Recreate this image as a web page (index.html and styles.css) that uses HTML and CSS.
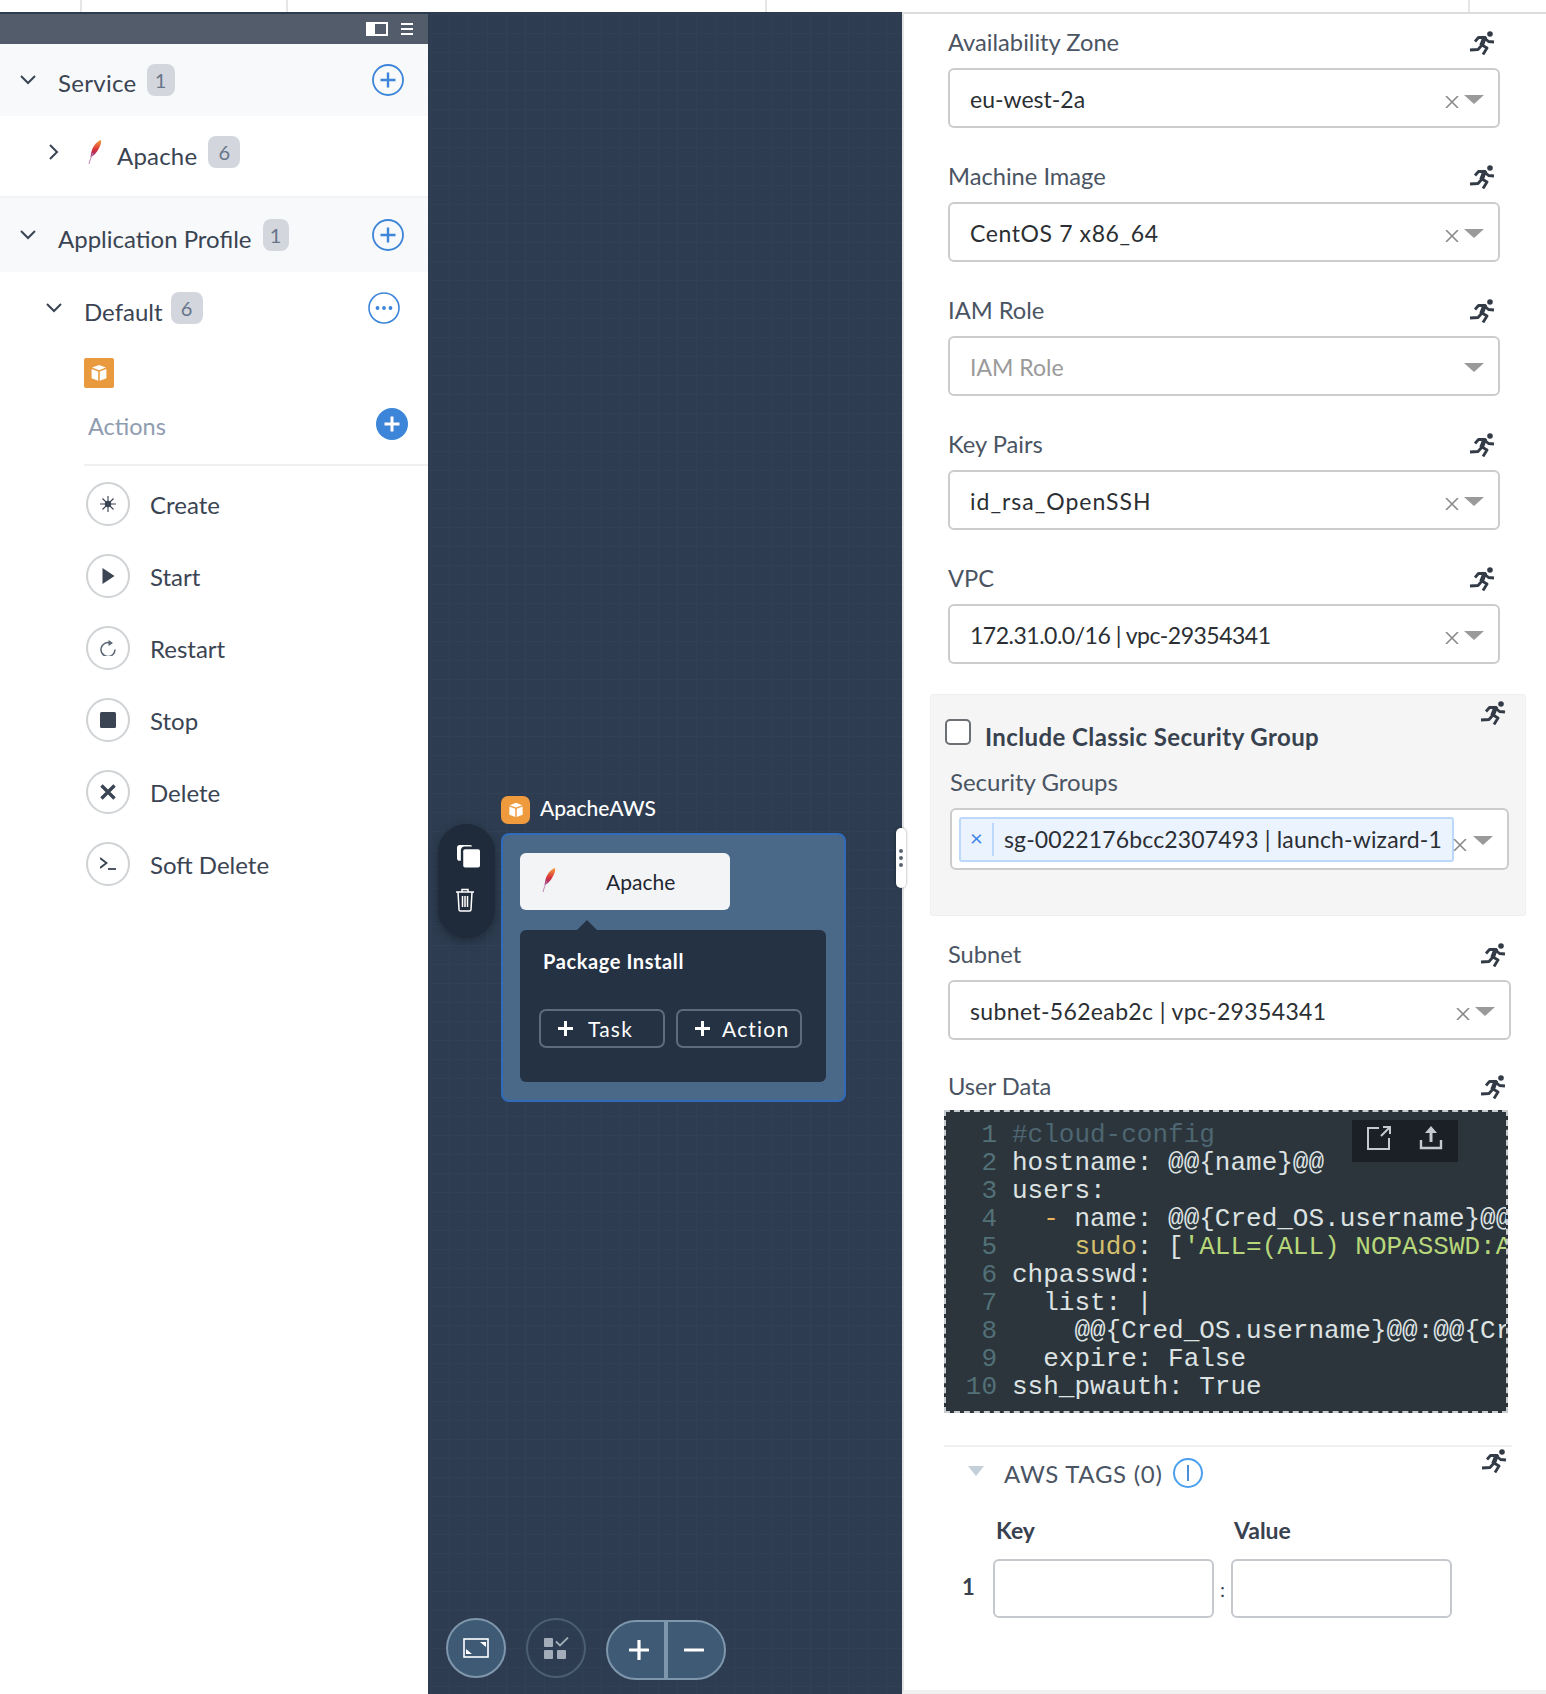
FILE: index.html
```html
<!DOCTYPE html>
<html lang="en">
<head>
  <meta charset="UTF-8" />
  <title>Blueprint Editor</title>
  <link rel="stylesheet" href="styles.css">
</head>
<body>
  <svg class="defs" width="0" height="0">
    <defs>
      <symbol id="runner" viewBox="0 0 27 24">
        <circle cx="21" cy="3" r="2.800" fill="currentColor"/>
        <path d="M6 10.500L9.500 6.500H16L13 14M15.500 7l4 3.500 5.500.500M13 14l-4 4.500-8 .500M13 14l5 3-4 6.500" fill="none" stroke="currentColor" stroke-width="2.800" stroke-linejoin="round"/>
        <path d="M16 5.500L12.500 14.500" stroke="currentColor" stroke-width="4.500"/>
      </symbol>
      <symbol id="feather" viewBox="0 0 14 26">
        <path d="M13 1C9 2 5 7 3.500 12.500L2.500 18C6 17 9 13 10.500 10 12.500 6.500 13.700 4 13 1z" fill="url(#featherFill)"/>
        <path d="M5 14C3.500 17 2 21 1 25" fill="none" stroke="#c486b4" stroke-width="1"/>
      </symbol>
      <linearGradient id="featherFill" x1="0" y1="0" x2="0" y2="1">
        <stop offset="0" stop-color="#f5a13f"/>
        <stop offset=".55" stop-color="#d9343a"/>
        <stop offset="1" stop-color="#8e2a7c"/>
      </linearGradient>
      <symbol id="cube" viewBox="0 0 20 20">
        <path d="M10 2l7 2.600L10 7.200 3 4.600zM2.600 6l6.600 2.500v9.300l-6.600-2.500zM17.400 6l-6.600 2.500v9.300l6.600-2.500z" fill="#fff"/>
      </symbol>
      <symbol id="plusCircle" viewBox="0 0 32 32">
        <circle cx="16" cy="16" r="15" fill="none" stroke="currentColor" stroke-width="1.800"/>
        <path d="M16 8.500v15M8.500 16h15" fill="none" stroke="currentColor" stroke-width="2.400"/>
      </symbol>
    </defs>
  </svg>

  <div class="top-strip">
    <div class="strip-cell w81"></div>
    <div class="strip-cell w206"></div>
    <div class="strip-cell w479"></div>
    <div class="strip-cell w703"></div>
  </div>

  <div class="main">
    <!-- left tree -->
    <aside class="tree">
      <div class="tree-head">
        <span class="panel-icon"></span>
        <span class="menu-icon"><i></i><i></i><i></i></span>
      </div>

      <div class="section-row first">
        <svg class="chev" viewBox="0 0 16 10"><path d="M1 1l7 7 7-7"/></svg>
        <span class="tree-label">Service</span>
        <span class="badge b28">1</span>
        <svg class="add"><use href="#plusCircle"/></svg>
      </div>
      <div class="service-row">
        <svg class="chev-right" viewBox="0 0 10 16"><path d="M1 1l7 7-7 7"/></svg>
        <svg class="feather"><use href="#feather"/></svg>
        <span class="tree-label">Apache</span>
        <span class="badge">6</span>
      </div>

      <div class="section-row">
        <svg class="chev" viewBox="0 0 16 10"><path d="M1 1l7 7 7-7"/></svg>
        <span class="tree-label">Application Profile</span>
        <span class="badge b26">1</span>
        <svg class="add"><use href="#plusCircle"/></svg>
      </div>
      <div class="profile-row">
        <svg class="chev" viewBox="0 0 16 10"><path d="M1 1l7 7 7-7"/></svg>
        <span class="tree-label">Default</span>
        <span class="badge">6</span>
        <svg class="more" viewBox="0 0 32 32">
          <circle cx="16" cy="16" r="15" fill="none" stroke="#3d85d8" stroke-width="1.600"/>
          <circle cx="9.500" cy="16" r="1.900" fill="#3d85d8"/><circle cx="16" cy="16" r="1.900" fill="#3d85d8"/><circle cx="22.500" cy="16" r="1.900" fill="#3d85d8"/>
        </svg>
      </div>

      <div class="cube-box"><svg class="cube-icon"><use href="#cube"/></svg></div>

      <div class="actions-head">
        <span class="actions-text">Actions</span>
        <svg class="add-solid" viewBox="0 0 32 32">
          <circle cx="16" cy="16" r="16" fill="#3d85d8"/>
          <path d="M16 8.500v15M8.500 16h15" stroke="#fff" stroke-width="3"/>
        </svg>
      </div>

      <ul class="action-list">
        <li>
          <span class="action-icon">
            <svg viewBox="0 0 16 16"><path d="M8 0v16M0 8h16M2.500 2.500l11 11M13.500 2.500l-11 11" stroke="#3a4452" stroke-width="1.100"/><circle cx="8" cy="8" r="3.200" fill="#3a4452"/></svg>
          </span>Create
        </li>
        <li>
          <span class="action-icon">
            <svg viewBox="0 0 16 16"><path d="M2.500 0l12 8-12 8z" fill="#3a4452"/></svg>
          </span>Start
        </li>
        <li>
          <span class="action-icon">
            <svg viewBox="0 0 16 16"><path d="M10.500 3A7 7 0 1 0 15 9.500" fill="none" stroke="#5b6675" stroke-width="1.500"/><path d="M8.500 0l4.500 3-4.500 3z" fill="#5b6675"/></svg>
          </span>Restart
        </li>
        <li>
          <span class="action-icon">
            <svg viewBox="0 0 16 16"><rect width="16" height="16" rx="1.500" fill="#3a4452"/></svg>
          </span>Stop
        </li>
        <li>
          <span class="action-icon">
            <svg viewBox="0 0 16 16"><path d="M1.500 1.500l13 13M14.500 1.500l-13 13" stroke="#3a4452" stroke-width="3.400"/></svg>
          </span>Delete
        </li>
        <li>
          <span class="action-icon">
            <svg viewBox="0 0 16 16"><path d="M0 2L6.500 7 0 12" fill="none" stroke="#3a4452" stroke-width="1.800"/><path d="M8 13h8" stroke="#3a4452" stroke-width="1.800"/></svg>
          </span>Soft Delete
        </li>
      </ul>
    </aside>

    <!-- canvas -->
    <section class="canvas">
      <div class="side-pill">
        <svg class="copy-icon" viewBox="0 0 24 24">
          <path d="M3 0h11a2 2 0 0 1 1.800 1.500H8A4 4 0 0 0 4 6v10.500H3a3 3 0 0 1-3-3V3a3 3 0 0 1 3-3z" fill="#fff"/>
          <rect x="6.500" y="4.500" width="17.500" height="19" rx="2" fill="#fff"/>
        </svg>
        <svg class="trash-icon" viewBox="0 0 20 24">
          <path d="M1 4h18M7 4V1.500h6V4M3 4l1 17.500a1.500 1.500 0 0 0 1.500 1.500h9a1.500 1.500 0 0 0 1.500-1.500L17 4M7.500 8v11M10 8v11M12.500 8v11" fill="none" stroke="#fff" stroke-width="1.500"/>
        </svg>
      </div>

      <div class="node-group">
        <div class="node-title">
          <span class="node-cube"><svg class="cube-small"><use href="#cube"/></svg></span>
          <span class="node-name">ApacheAWS</span>
        </div>
        <div class="node">
          <div class="service-card">
            <svg class="feather card-feather"><use href="#feather"/></svg>
            <span class="card-name">Apache</span>
          </div>
          <div class="popup">
            <div class="popup-title">Package Install</div>
            <div class="popup-btns">
              <button class="ghost-btn"><span class="ghost-plus"></span>Task</button>
              <button class="ghost-btn"><span class="ghost-plus"></span>Action</button>
            </div>
          </div>
        </div>
      </div>

      <div class="handle"><i></i><i></i><i></i></div>

      <div class="canvas-controls">
        <button class="round-btn">
          <svg viewBox="0 0 26 20" class="fit-icon">
            <rect x="1" y="1" width="24" height="18" fill="none" stroke="#fff" stroke-width="1.600"/>
            <path d="M17 4h6v5zM9 16H3v-5z" fill="#fff"/>
          </svg>
        </button>
        <button class="round-btn muted">
          <svg viewBox="0 0 26 22" class="check-icon">
            <rect x="1" y="1" width="9" height="9" rx="1" fill="#a3adb9"/>
            <rect x="1" y="13" width="9" height="9" rx="1" fill="#a3adb9"/>
            <rect x="14" y="13" width="9" height="9" rx="1" fill="#a3adb9"/>
            <path d="M13 4.500l4 4 8-8" fill="none" stroke="#a3adb9" stroke-width="1.800"/>
          </svg>
        </button>
        <div class="zoom-pill">
          <span class="zoom-side"><svg viewBox="0 0 20 20"><path d="M10 1v18M1 10h18" stroke="#fff" stroke-width="3.200" stroke-linecap="round"/></svg></span>
          <span class="zoom-side"><svg viewBox="0 0 20 20"><path d="M1 10h18" stroke="#fff" stroke-width="3.200" stroke-linecap="round"/></svg></span>
        </div>
      </div>
    </section>

    <!-- right form -->
    <section class="form">
      <div class="field">
        <div class="label-row"><span>Availability Zone</span><svg class="runner"><use href="#runner"/></svg></div>
        <div class="select"><span class="value">eu-west-2a</span><svg class="clear" viewBox="0 0 14 12"><path d="M1 0l12 12M13 0L1 12"/></svg><span class="caret"></span></div>
      </div>
      <div class="field">
        <div class="label-row"><span>Machine Image</span><svg class="runner"><use href="#runner"/></svg></div>
        <div class="select"><span class="value spaced">CentOS 7 x86_64</span><svg class="clear" viewBox="0 0 14 12"><path d="M1 0l12 12M13 0L1 12"/></svg><span class="caret"></span></div>
      </div>
      <div class="field">
        <div class="label-row"><span>IAM Role</span><svg class="runner"><use href="#runner"/></svg></div>
        <div class="select"><span class="value placeholder">IAM Role</span><span class="caret"></span></div>
      </div>
      <div class="field">
        <div class="label-row"><span>Key Pairs</span><svg class="runner"><use href="#runner"/></svg></div>
        <div class="select"><span class="value spaced-more">id_rsa_OpenSSH</span><svg class="clear" viewBox="0 0 14 12"><path d="M1 0l12 12M13 0L1 12"/></svg><span class="caret"></span></div>
      </div>
      <div class="field">
        <div class="label-row"><span>VPC</span><svg class="runner"><use href="#runner"/></svg></div>
        <div class="select"><span class="value tight">172.31.0.0/16 | vpc-29354341</span><svg class="clear" viewBox="0 0 14 12"><path d="M1 0l12 12M13 0L1 12"/></svg><span class="caret"></span></div>
      </div>

      <div class="sg-panel">
        <svg class="runner corner"><use href="#runner"/></svg>
        <div class="check-row"><span class="checkbox"></span><span class="check-label">Include Classic Security Group</span></div>
        <div class="sg-label">Security Groups</div>
        <div class="select multi">
          <div class="tag">
            <span class="tag-x">×</span>
            <span class="tag-text">sg-0022176bcc2307493 | launch-wizard-1</span>
          </div>
          <svg class="clear" viewBox="0 0 14 12"><path d="M1 0l12 12M13 0L1 12"/></svg><span class="caret"></span>
        </div>
      </div>

      <div class="field wide subnet">
        <div class="label-row"><span>Subnet</span><svg class="runner"><use href="#runner"/></svg></div>
        <div class="select"><span class="value spaced-less">subnet-562eab2c | vpc-29354341</span><svg class="clear" viewBox="0 0 14 12"><path d="M1 0l12 12M13 0L1 12"/></svg><span class="caret"></span></div>
      </div>

      <div class="field wide userdata">
        <div class="label-row"><span>User Data</span><svg class="runner"><use href="#runner"/></svg></div>
      </div>
      <div class="editor">
        <div class="editor-tools">
          <svg viewBox="0 0 26 26"><path d="M13 3H2v21h21V13M15 11L24 2M17 2h7v7" fill="none" stroke="#c4cacd" stroke-width="2"/></svg>
          <svg viewBox="0 0 26 26"><path d="M13 1l6 7h-4.500v9h-3V8H7z" fill="#c4cacd"/><path d="M3 15v8h20v-8" fill="none" stroke="#c4cacd" stroke-width="2.400"/></svg>
        </div>
        <div class="line"><span class="num">1</span><span class="code comment">#cloud-config</span></div>
        <div class="line"><span class="num">2</span><span class="code">hostname: @@{name}@@</span></div>
        <div class="line"><span class="num">3</span><span class="code">users:</span></div>
        <div class="line"><span class="num">4</span><span class="code">  <span class="dash">-</span> name: @@{Cred_OS.username}@@</span></div>
        <div class="line"><span class="num">5</span><span class="code">    <span class="key">sudo</span>: [<span class="str">'ALL=(ALL) NOPASSWD:ALL'</span>]</span></div>
        <div class="line"><span class="num">6</span><span class="code">chpasswd:</span></div>
        <div class="line"><span class="num">7</span><span class="code">  list: |</span></div>
        <div class="line"><span class="num">8</span><span class="code">    @@{Cred_OS.username}@@:@@{Cred_OS.secret}@@</span></div>
        <div class="line"><span class="num">9</span><span class="code">  expire: False</span></div>
        <div class="line"><span class="num">10</span><span class="code">ssh_pwauth: True</span></div>
      </div>

      <div class="tags">
        <svg class="runner corner"><use href="#runner"/></svg>
        <div class="tags-head">
          <span class="tags-caret"></span>
          <span class="tags-title">AWS TAGS (0)</span>
          <span class="info"><i></i></span>
        </div>
        <div class="tags-cols"><span class="col-key">Key</span><span>Value</span></div>
        <div class="tags-row">
          <span class="row-num">1</span>
          <span class="tag-input"></span>
          <span class="colon">:</span>
          <span class="tag-input"></span>
        </div>
      </div>
    </section>
  </div>
</body>
</html>
```

FILE: styles.css
```css
* {
  box-sizing: border-box;
}

html, body {
  margin: 0;
  height: 1694px;
  overflow: hidden;
}

body {
  font-family: Lato, "Open Sans", sans-serif;
  background-color: #ffffff;
  color: #3a4452;
}

.defs {
  position: absolute;
}

/* top strip */
.top-strip {
  display: flex;
  height: 12px;
}

.strip-cell {
  height: 12px;
  border-right: 2px solid #e6e6e6;
}

.w81 { width: 82px; }
.w206 { width: 206px; }
.w479 { width: 479px; }
.w703 { width: 703px; }

.main {
  display: flex;
  height: 1682px;
}

/* left tree */
.tree {
  width: 430px;
  flex-shrink: 0;
  border-top: 2px solid #2d3b4f;
  border-right: 2px solid #2d3b4f;
}

.tree-head {
  display: flex;
  align-items: center;
  justify-content: flex-end;
  height: 30px;
  padding-right: 15px;
  background-color: #525c6b;
}

.panel-icon {
  width: 22px;
  height: 14px;
  margin-right: 13px;
  border: 2px solid #ffffff;
  border-left-width: 9px;
}

.menu-icon {
  display: flex;
  flex-direction: column;
  gap: 3px;
  width: 12px;
}

.menu-icon i {
  height: 2px;
  background-color: #ffffff;
}

.section-row,
.service-row,
.profile-row {
  display: flex;
  align-items: center;
}

.section-row {
  height: 74px;
  padding: 0 24px 0 20px;
  background-color: #f7f9fb;
}

.section-row.first {
  height: 72px;
}

.section-row.first .tree-label {
  padding-top: 6px;
  letter-spacing: 0.3px;
}

.section-row .chev {
  margin-right: 22px;
}

.chev {
  width: 16px;
  height: 10px;
  flex-shrink: 0;
}

.chev path,
.chev-right path {
  fill: none;
  stroke: #3a4452;
  stroke-width: 2;
}

.chev-right {
  width: 10px;
  height: 16px;
  margin: -8px 29px 0 49px;
}

.tree-label {
  font-size: 24px;
  line-height: 28px;
  padding-top: 8px;
  color: #3a4452;
}

.service-row .tree-label {
  padding-top: 0;
  letter-spacing: 0.2px;
}

.badge {
  width: 32px;
  height: 32px;
  margin-left: 11px;
  border-radius: 8px;
  background-color: #d3d7dd;
  color: #66758a;
  font-size: 20px;
  line-height: 32px;
  text-align: center;
}

.service-row .badge {
  margin-top: -9px;
}

.profile-row .badge {
  margin-left: 8px;
}

.b28 { width: 28px; margin-left: 10px; }
.b26 { width: 26px; margin-left: 11px; }

.add {
  width: 32px;
  height: 32px;
  margin-left: auto;
  color: #3d85d8;
}

.service-row {
  height: 82px;
  border-bottom: 2px solid #f1f3f5;
}

.feather {
  width: 14px;
  height: 26px;
  margin-right: 15px;
  margin-top: -8px;
}

.profile-row {
  height: 72px;
  padding: 0 28px 0 46px;
}

.profile-row .chev {
  margin-right: 22px;
}

.more {
  width: 32px;
  height: 32px;
  margin-left: auto;
}

.cube-box {
  display: flex;
  align-items: center;
  justify-content: center;
  width: 30px;
  height: 30px;
  margin: 14px 0 0 84px;
  border-radius: 2px;
  background-color: #e99a3f;
}

.cube-icon {
  width: 20px;
  height: 20px;
}

.actions-head {
  display: flex;
  align-items: center;
  justify-content: space-between;
  height: 78px;
  margin-left: 84px;
  padding: 0 20px 4px 4px;
  border-bottom: 2px solid #eef0f2;
  color: #8f9cb0;
  font-size: 23.5px;
}

.actions-text {
  margin-top: 3px;
}

.add-solid {
  width: 32px;
  height: 32px;
}

.action-list {
  list-style: none;
  margin: 2px 0 0 86px;
  padding: 0;
}

.action-list li {
  display: flex;
  align-items: center;
  height: 72px;
  font-size: 24px;
}

.action-icon {
  display: flex;
  align-items: center;
  justify-content: center;
  width: 44px;
  height: 44px;
  margin-right: 20px;
  border: 2px solid #cfd2d4;
  border-radius: 50%;
}

.action-icon svg {
  width: 16px;
  height: 16px;
}

/* canvas */
.canvas {
  position: relative;
  width: 472px;
  flex-shrink: 0;
  border-top: 2px solid #2d3b4f;
  background-color: #2d3c50;
  background-image:
    linear-gradient(#314056 1px, transparent 1px),
    linear-gradient(90deg, #314056 1px, transparent 1px);
  background-size: 19px 19px;
}

.side-pill {
  position: absolute;
  left: 8px;
  top: 810px;
  display: flex;
  flex-direction: column;
  align-items: center;
  width: 57px;
  height: 114px;
  padding-top: 21px;
  border-radius: 29px;
  background-color: #1f2b3a;
  box-shadow: 0 3px 10px rgba(0, 0, 0, 0.3);
}

.copy-icon {
  width: 23px;
  height: 23px;
  margin-left: 4px;
}

.trash-icon {
  width: 20px;
  height: 24px;
  margin-top: 20px;
  margin-left: -3px;
}

.node-group {
  position: absolute;
  left: 71px;
  top: 782px;
  width: 345px;
}

.node-title {
  display: flex;
  align-items: center;
  height: 28px;
  margin-bottom: 9px;
  color: #ffffff;
  font-size: 21px;
  font-weight: 500;
}

.node-name {
  margin-top: -6px;
}

.node-cube {
  display: flex;
  align-items: center;
  justify-content: center;
  width: 29px;
  height: 28px;
  margin-right: 10px;
  border-radius: 7px;
  background-color: #ef9a3d;
}

.cube-small {
  width: 18px;
  height: 18px;
}

.node {
  height: 269px;
  padding: 18px 17px;
  border: 2px solid #2f6bb8;
  border-radius: 8px;
  background-color: #4a6988;
}

.service-card {
  display: flex;
  align-items: center;
  width: 210px;
  height: 57px;
  padding-left: 22px;
  border-radius: 6px;
  background-color: #f3f4f6;
}

.card-feather {
  margin-top: -4px;
  margin-right: 50px;
}

.card-name {
  color: #1f2630;
  font-size: 21px;
}

.popup {
  position: relative;
  width: 306px;
  height: 152px;
  margin-top: 20px;
  padding: 17px 19px;
  border-radius: 6px;
  background-color: #253244;
}

.popup::before {
  content: "";
  position: absolute;
  left: 57px;
  top: -10px;
  border-left: 10px solid transparent;
  border-right: 10px solid transparent;
  border-bottom: 10px solid #253244;
}

.popup-title {
  padding-left: 4px;
  color: #ffffff;
  font-size: 20px;
  font-weight: 700;
  letter-spacing: 0.6px;
  line-height: 28px;
}

.popup-btns {
  display: flex;
  gap: 11px;
  margin-top: 34px;
}

.ghost-btn {
  display: flex;
  align-items: center;
  width: 126px;
  height: 39px;
  padding: 0 0 0 17px;
  border: 2px solid #5d6b7a;
  border-radius: 7px;
  background: none;
  color: #ffffff;
  font-family: inherit;
  font-size: 21px;
  letter-spacing: 1.2px;
}

.ghost-plus {
  position: relative;
  width: 15px;
  height: 15px;
  margin-right: 15px;
}

.ghost-btn + .ghost-btn .ghost-plus {
  margin-right: 12px;
}

.ghost-plus::before,
.ghost-plus::after {
  content: "";
  position: absolute;
  background-color: #ffffff;
}

.ghost-plus::before {
  left: 0;
  right: 0;
  top: 6px;
  height: 3px;
}

.ghost-plus::after {
  top: 0;
  bottom: 0;
  left: 6px;
  width: 3px;
}

.handle {
  position: absolute;
  right: -4px;
  top: 814px;
  display: flex;
  flex-direction: column;
  align-items: center;
  justify-content: center;
  gap: 3px;
  width: 10px;
  height: 60px;
  border-radius: 5px;
  background-color: #ffffff;
  box-shadow: 0 0 3px rgba(0, 0, 0, 0.4);
  z-index: 2;
}

.handle i {
  width: 4px;
  height: 4px;
  border-radius: 50%;
  background-color: #5a6470;
}

.canvas-controls {
  position: absolute;
  left: 16px;
  top: 1604px;
  display: flex;
  align-items: flex-start;
  gap: 20px;
}

.round-btn {
  display: flex;
  align-items: center;
  justify-content: center;
  width: 60px;
  height: 60px;
  padding: 0;
  border: 2px solid #7f97ad;
  border-radius: 50%;
  background-color: #3f5a75;
}

.round-btn.muted {
  border-color: #4c5e72;
  background: none;
}

.fit-icon {
  width: 26px;
  height: 20px;
}

.check-icon {
  width: 26px;
  height: 22px;
}

.zoom-pill {
  display: flex;
  width: 120px;
  height: 60px;
  margin-top: 2px;
  border: 2px solid #7f97ad;
  border-radius: 30px;
  background-color: #3f5a75;
  overflow: hidden;
}

.zoom-side {
  display: flex;
  align-items: center;
  justify-content: center;
  flex: 1;
}

.zoom-side:first-child {
  border-right: 4px solid #7f97ad;
  padding-left: 5px;
}

.zoom-side:last-child {
  padding-right: 5px;
}

.zoom-side svg {
  width: 20px;
  height: 20px;
}

/* right form */
.form {
  position: relative;
  flex: 1;
  padding-left: 44px;
  border-top: 2px solid #dcdcdc;
  border-left: 2px solid #e4e4e4;
  border-bottom: 4px solid #f1f1f1;
}

.form > .field:first-child {
  margin-top: -1px;
}

.field {
  width: 552px;
  margin-bottom: 19px;
}

.label-row {
  display: flex;
  align-items: center;
  justify-content: space-between;
  height: 55px;
  padding: 4px 4px 0 0;
  color: #4a5463;
  font-size: 23.7px;
}

.label-row span {
  margin-top: -2px;
}

.runner {
  width: 27px;
  height: 24px;
  color: #333b46;
}

.select {
  display: flex;
  align-items: center;
  height: 60px;
  padding: 0 14px 0 20px;
  border: 2px solid #cccccc;
  border-radius: 6px;
  background-color: #ffffff;
}

.value {
  flex: 1;
  margin-top: 1px;
  color: #2b2f33;
  font-size: 23px;
}

.value.placeholder {
  color: #9a9a9a;
}

.value.spaced { letter-spacing: 0.6px; }
.value.spaced-more { letter-spacing: 1px; }
.value.spaced-less { letter-spacing: 0.35px; }
.value.tight { letter-spacing: -0.5px; }

.clear {
  width: 14px;
  height: 12px;
  margin: 8px 5px 0 0;
}

.clear path {
  fill: none;
  stroke: #8a8a8a;
  stroke-width: 1.600;
}

.caret {
  width: 0;
  height: 0;
  margin-top: 2px;
  border-left: 10px solid transparent;
  border-right: 10px solid transparent;
  border-top: 9px solid #9a9a9a;
}

.sg-panel {
  position: relative;
  width: 596px;
  height: 222px;
  margin: 30px 0 0 -18px;
  padding: 24px 0 0 14px;
  border: 1px solid #efefef;
  border-radius: 3px;
  background-color: #f5f5f5;
}

.corner {
  position: absolute;
  right: 18px;
  top: 6px;
}

.check-row {
  display: flex;
  align-items: flex-start;
  height: 40px;
}

.checkbox {
  width: 26px;
  height: 26px;
  border: 2px solid #6c6f73;
  border-radius: 5px;
  background-color: #ffffff;
}

.check-label {
  margin: 3px 0 0 14px;
  color: #38424f;
  font-size: 24px;
  font-weight: 700;
  letter-spacing: 0.4px;
}

.sg-label {
  height: 49px;
  padding: 8px 0 0 5px;
  color: #4a5463;
  font-size: 24px;
}

.select.multi {
  width: 559px;
  height: 62px;
  margin-left: 5px;
  padding: 0 14px 0 7px;
}

.tag {
  display: flex;
  align-items: center;
  width: 497px;
  height: 45px;
  margin-right: -1px;
  border: 2px solid #bcd8fb;
  border-radius: 3px;
  background-color: #ebf3fe;
}

.tag-x {
  width: 33px;
  height: 33px;
  border-right: 2px solid #bcd8fb;
  color: #3d85e8;
  font-size: 22px;
  line-height: 30px;
  text-align: center;
}

.tag-text {
  padding-left: 10px;
  color: #2b2f33;
  font-size: 23px;
  letter-spacing: 0.15px;
  white-space: nowrap;
}

.select.multi .clear {
  margin: 12px 6px 0 0;
}

.field.wide {
  width: 563px;
}

.field.subnet {
  margin: 9px 0 20px 0;
}

.field.userdata {
  margin-bottom: 0;
}

.field.userdata .label-row {
  height: 50px;
}

.editor {
  position: relative;
  width: 564px;
  height: 303px;
  margin-left: -4px;
  padding-top: 9px;
  border: 2px dashed #c8cccf;
  background-color: #2c353b;
  font-family: "Liberation Mono", monospace;
  font-size: 26px;
  line-height: 28px;
  overflow: hidden;
}

.editor-tools {
  position: absolute;
  right: 48px;
  top: 8px;
  display: flex;
  align-items: center;
  justify-content: center;
  gap: 26px;
  width: 106px;
  height: 42px;
  padding-bottom: 6px;
  background-color: #1a2025;
  z-index: 1;
}

.editor-tools svg {
  width: 26px;
  height: 26px;
}

.line {
  display: flex;
  height: 28px;
  white-space: pre;
}

.num {
  flex-shrink: 0;
  width: 51px;
  margin-right: 15px;
  color: #527077;
  text-align: right;
}

.code {
  color: #dde2e3;
}

.comment { color: #4d6672; }
.dash { color: #e9b35f; }
.key { color: #d4bf6e; }
.str { color: #b7d77a; }

.tags {
  position: relative;
  width: 568px;
  height: 200px;
  margin: 32px 0 0 -4px;
  border-top: 2px solid #f1f1f1;
}

.tags .corner {
  right: 4px;
  top: 2px;
}

.tags-head {
  display: flex;
  align-items: center;
  height: 52px;
  padding-left: 24px;
}

.tags-caret {
  width: 0;
  height: 0;
  margin: -4px 20px 0 0;
  border-left: 8px solid transparent;
  border-right: 8px solid transparent;
  border-top: 10px solid #c3d0da;
}

.tags-title {
  color: #4a5463;
  font-size: 24px;
  letter-spacing: 0.7px;
}

.info {
  display: flex;
  align-items: center;
  justify-content: center;
  width: 30px;
  height: 30px;
  margin-left: 10px;
  border: 2px solid #4aa0ee;
  border-radius: 50%;
}

.info i {
  width: 2px;
  height: 16px;
  background-color: #4a8fd8;
}

.tags-cols {
  display: flex;
  padding: 17px 0 0 52px;
  color: #38424f;
  font-size: 23px;
  font-weight: 700;
  line-height: 28px;
}

.col-key {
  width: 238px;
}

.tags-row {
  display: flex;
  align-items: center;
  margin-top: 15px;
  padding-left: 18px;
}

.row-num {
  width: 31px;
  margin-top: -5px;
  color: #38424f;
  font-size: 22px;
  font-weight: 700;
}

.tag-input {
  width: 221px;
  height: 59px;
  border: 2px solid #c5c9ce;
  border-radius: 6px;
  background-color: #ffffff;
}

.colon {
  width: 17px;
  color: #38424f;
  font-size: 20px;
  text-align: center;
}
```
